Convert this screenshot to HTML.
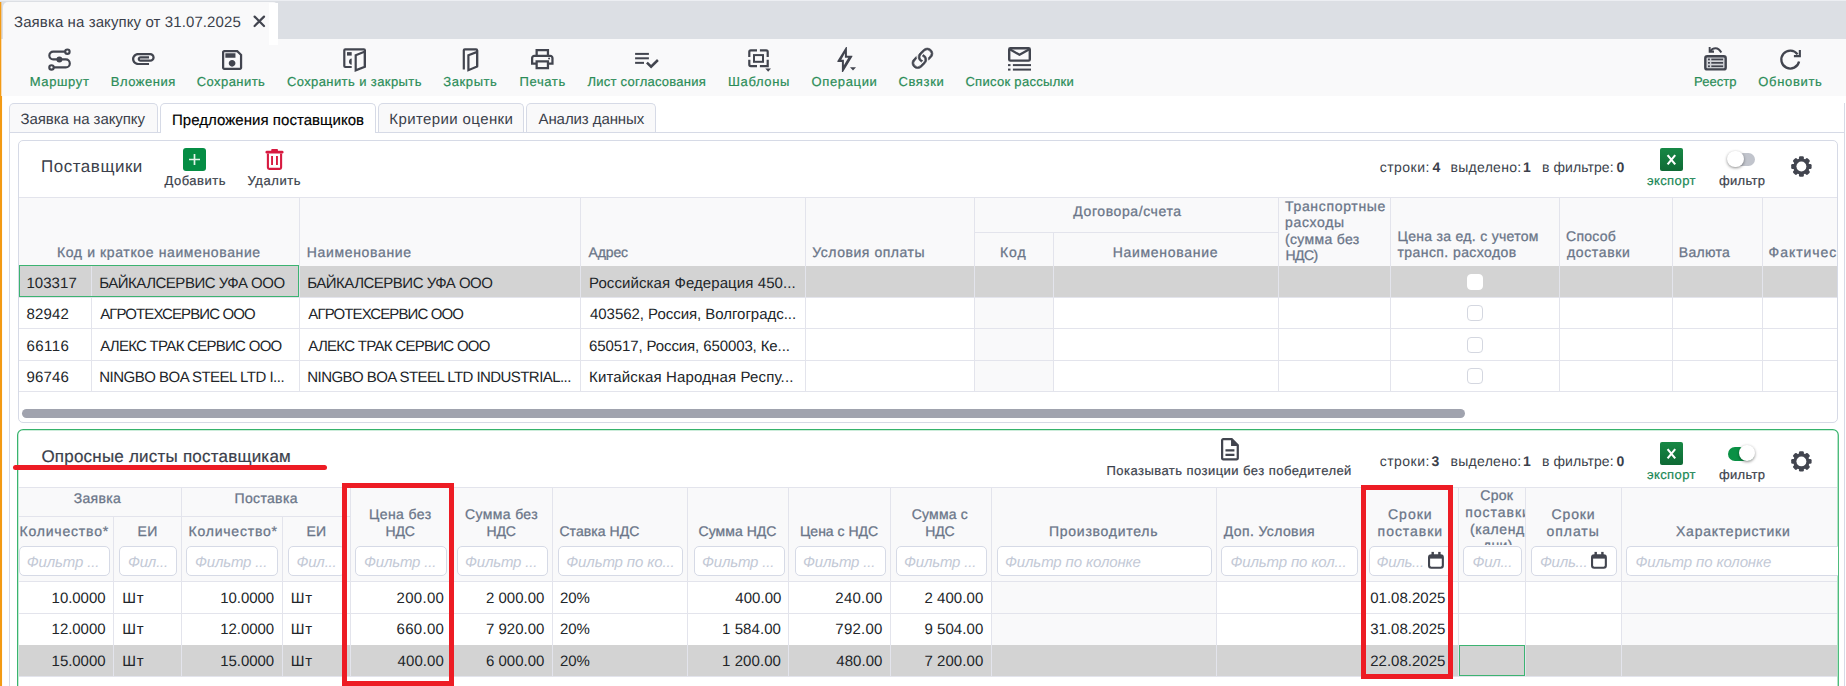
<!DOCTYPE html><html><head><meta charset="utf-8"><title>Заявка на закупку</title><style>
html,body{margin:0;padding:0}
*{text-rendering:geometricPrecision}
body{width:1846px;height:686px;overflow:hidden;position:relative;background:#fff;font-family:"Liberation Sans", sans-serif}
.t{position:absolute;white-space:pre;line-height:20px;height:20px}
.c{position:absolute;overflow:hidden}
</style></head><body>
<div style="position:absolute;left:0px;top:0px;width:1846px;height:39px;background:#dcdfe4;"></div>
<div style="position:absolute;left:0px;top:0px;width:1846px;height:1px;background:#eceef2;"></div>
<div style="position:absolute;left:3px;top:2px;width:275px;height:37px;background:#f9f9fa;border-radius:5px 5px 0 0;"></div>
<div style="position:absolute;left:269px;top:3px;width:9px;height:42px;background:#fff;"></div>
<div style="position:absolute;left:0px;top:39px;width:1846px;height:57px;background:#f9f9fa;"></div>
<div style="position:absolute;left:269px;top:39px;width:9px;height:6px;background:#fff;"></div>
<svg style="position:absolute;left:0;top:0" width="4" height="686"><rect x="0" y="2" width="1.3" height="94" fill="#f39a14"/><rect x="0" y="96" width="2.05" height="590" fill="#f39a14"/></svg>
<div style="position:absolute;left:9px;top:132px;width:1836px;height:1px;background:#d6dae6;"></div>
<div style="position:absolute;left:9px;top:132px;width:1px;height:554px;background:#d6dae6;"></div>
<div style="position:absolute;left:1844px;top:103px;width:1px;height:583px;background:#d6dae6;"></div>
<div style="position:absolute;left:9px;top:103px;width:147px;height:28px;background:#f9f9fa;border:1px solid #d6dae6;border-bottom:none;border-radius:5px 5px 0 0"></div>
<div style="position:absolute;left:160px;top:103px;width:214px;height:29px;background:#fff;border:1px solid #d6dae6;border-bottom:none;border-radius:5px 5px 0 0"></div>
<div style="position:absolute;left:378px;top:103px;width:144px;height:28px;background:#f9f9fa;border:1px solid #d6dae6;border-bottom:none;border-radius:5px 5px 0 0"></div>
<div style="position:absolute;left:526px;top:103px;width:128px;height:28px;background:#f9f9fa;border:1px solid #d6dae6;border-bottom:none;border-radius:5px 5px 0 0"></div>
<div style="position:absolute;left:18px;top:140px;width:1818px;height:281px;border:1px solid #d6dae6;border-radius:5px;background:#fff"></div>
<div style="position:absolute;left:19px;top:197px;width:1818px;height:1px;background:#e3e4ec;"></div>
<div style="position:absolute;left:19px;top:198px;width:1818px;height:68px;background:#f9f9fa;"></div>
<div style="position:absolute;left:19px;top:266px;width:1818px;height:31px;background:#d3d3d3;"></div>
<div style="position:absolute;left:974px;top:297px;width:79px;height:31.5px;background:#f9f9fa;"></div>
<div style="position:absolute;left:974px;top:328.5px;width:79px;height:31.5px;background:#f9f9fa;"></div>
<div style="position:absolute;left:974px;top:360px;width:79px;height:31px;background:#f9f9fa;"></div>
<div style="position:absolute;left:19px;top:297px;width:1818px;height:1px;background:#e3e4ec;"></div>
<div style="position:absolute;left:19px;top:328px;width:1818px;height:1px;background:#e3e4ec;"></div>
<div style="position:absolute;left:19px;top:360px;width:1818px;height:1px;background:#e3e4ec;"></div>
<div style="position:absolute;left:19px;top:391px;width:1818px;height:1px;background:#e3e4ec;"></div>
<div style="position:absolute;left:299px;top:198px;width:1px;height:194px;background:#e3e4ec;"></div>
<div style="position:absolute;left:580px;top:198px;width:1px;height:194px;background:#e3e4ec;"></div>
<div style="position:absolute;left:805px;top:198px;width:1px;height:194px;background:#e3e4ec;"></div>
<div style="position:absolute;left:974px;top:198px;width:1px;height:194px;background:#e3e4ec;"></div>
<div style="position:absolute;left:1278px;top:198px;width:1px;height:194px;background:#e3e4ec;"></div>
<div style="position:absolute;left:1390px;top:198px;width:1px;height:194px;background:#e3e4ec;"></div>
<div style="position:absolute;left:1559px;top:198px;width:1px;height:194px;background:#e3e4ec;"></div>
<div style="position:absolute;left:1672px;top:198px;width:1px;height:194px;background:#e3e4ec;"></div>
<div style="position:absolute;left:1762px;top:198px;width:1px;height:194px;background:#e3e4ec;"></div>
<div style="position:absolute;left:91px;top:266px;width:1px;height:126px;background:#e3e4ec;"></div>
<div style="position:absolute;left:1053px;top:233px;width:1px;height:159px;background:#e3e4ec;"></div>
<div style="position:absolute;left:974px;top:232px;width:304px;height:1px;background:#e3e4ec;"></div>
<div style="position:absolute;left:19px;top:265px;width:278px;height:30px;border:1px solid #3cb371"></div>
<div style="position:absolute;left:1467px;top:273.5px;width:14px;height:14px;border:1px solid #fff;border-radius:4px;background:#fff"></div>
<div style="position:absolute;left:1467px;top:305px;width:14px;height:14px;border:1px solid #d4d7e0;border-radius:4px;background:#fff"></div>
<div style="position:absolute;left:1467px;top:336.5px;width:14px;height:14px;border:1px solid #d4d7e0;border-radius:4px;background:#fff"></div>
<div style="position:absolute;left:1467px;top:368px;width:14px;height:14px;border:1px solid #d4d7e0;border-radius:4px;background:#fff"></div>
<div style="position:absolute;left:22px;top:409px;width:1443px;height:9px;background:#a0a3ae;border-radius:5px;"></div>
<svg style="position:absolute;left:0;top:0;overflow:visible;" width="1846" height="686" viewBox="0 0 1846 686"><rect x="17.65" y="429.55" width="1820.6" height="300" rx="5.5" fill="#fff" stroke="#36b36c" stroke-width="1.25"/></svg>
<div style="position:absolute;left:19px;top:487px;width:1818px;height:1px;background:#e3e4ec;"></div>
<div style="position:absolute;left:19px;top:488px;width:1818px;height:93px;background:#f9f9fa;"></div>
<div style="position:absolute;left:19px;top:645px;width:1818px;height:31px;background:#d3d3d3;"></div>
<div style="position:absolute;left:991px;top:582px;width:225px;height:31px;background:#f9f9fa;"></div>
<div style="position:absolute;left:1622px;top:582px;width:215px;height:31px;background:#f9f9fa;"></div>
<div style="position:absolute;left:991px;top:614px;width:225px;height:31px;background:#f9f9fa;"></div>
<div style="position:absolute;left:1622px;top:614px;width:215px;height:31px;background:#f9f9fa;"></div>
<div style="position:absolute;left:19px;top:581px;width:1818px;height:1px;background:#e3e4ec;"></div>
<div style="position:absolute;left:19px;top:613px;width:1818px;height:1px;background:#e3e4ec;"></div>
<div style="position:absolute;left:19px;top:645px;width:1818px;height:1px;background:#e3e4ec;"></div>
<div style="position:absolute;left:19px;top:676px;width:1818px;height:1px;background:#e3e4ec;"></div>
<div style="position:absolute;left:19px;top:645px;width:1818px;height:1px;background:#d3d3d3;"></div>
<div style="position:absolute;left:113px;top:517px;width:1px;height:159px;background:#e3e4ec;"></div>
<div style="position:absolute;left:181px;top:488px;width:1px;height:188px;background:#e3e4ec;"></div>
<div style="position:absolute;left:282px;top:517px;width:1px;height:159px;background:#e3e4ec;"></div>
<div style="position:absolute;left:350px;top:488px;width:1px;height:188px;background:#e3e4ec;"></div>
<div style="position:absolute;left:451px;top:488px;width:1px;height:188px;background:#e3e4ec;"></div>
<div style="position:absolute;left:552px;top:488px;width:1px;height:188px;background:#e3e4ec;"></div>
<div style="position:absolute;left:687px;top:488px;width:1px;height:188px;background:#e3e4ec;"></div>
<div style="position:absolute;left:788px;top:488px;width:1px;height:188px;background:#e3e4ec;"></div>
<div style="position:absolute;left:890px;top:488px;width:1px;height:188px;background:#e3e4ec;"></div>
<div style="position:absolute;left:991px;top:488px;width:1px;height:188px;background:#e3e4ec;"></div>
<div style="position:absolute;left:1216px;top:488px;width:1px;height:188px;background:#e3e4ec;"></div>
<div style="position:absolute;left:1362px;top:488px;width:1px;height:188px;background:#e3e4ec;"></div>
<div style="position:absolute;left:1458px;top:488px;width:1px;height:188px;background:#e3e4ec;"></div>
<div style="position:absolute;left:1525px;top:488px;width:1px;height:188px;background:#e3e4ec;"></div>
<div style="position:absolute;left:1621px;top:488px;width:1px;height:188px;background:#e3e4ec;"></div>
<div style="position:absolute;left:19px;top:516px;width:331px;height:1px;background:#e3e4ec;"></div>
<div style="position:absolute;left:19px;top:546px;width:89px;height:28px;border:1px solid #d6dae6;border-radius:5px;background:#fff"></div>
<div style="position:absolute;left:119px;top:546px;width:55.5px;height:28px;border:1px solid #d6dae6;border-radius:5px;background:#fff"></div>
<div style="position:absolute;left:186px;top:546px;width:89.5px;height:28px;border:1px solid #d6dae6;border-radius:5px;background:#fff"></div>
<div style="position:absolute;left:288px;top:546px;width:55px;height:28px;border:1px solid #d6dae6;border-radius:5px;background:#fff"></div>
<div style="position:absolute;left:355px;top:546px;width:89.5px;height:28px;border:1px solid #d6dae6;border-radius:5px;background:#fff"></div>
<div style="position:absolute;left:456.5px;top:546px;width:89.0px;height:28px;border:1px solid #d6dae6;border-radius:5px;background:#fff"></div>
<div style="position:absolute;left:558px;top:546px;width:122.5px;height:28px;border:1px solid #d6dae6;border-radius:5px;background:#fff"></div>
<div style="position:absolute;left:693.5px;top:546px;width:89.0px;height:28px;border:1px solid #d6dae6;border-radius:5px;background:#fff"></div>
<div style="position:absolute;left:794.5px;top:546px;width:89.0px;height:28px;border:1px solid #d6dae6;border-radius:5px;background:#fff"></div>
<div style="position:absolute;left:895.5px;top:546px;width:89.0px;height:28px;border:1px solid #d6dae6;border-radius:5px;background:#fff"></div>
<div style="position:absolute;left:996.5px;top:546px;width:213.0px;height:28px;border:1px solid #d6dae6;border-radius:5px;background:#fff"></div>
<div style="position:absolute;left:1221px;top:546px;width:134.5px;height:28px;border:1px solid #d6dae6;border-radius:5px;background:#fff"></div>
<div style="position:absolute;left:1368.5px;top:546px;width:82.5px;height:28px;border:1px solid #d6dae6;border-radius:5px;background:#fff"></div>
<div style="position:absolute;left:1463px;top:546px;width:56.5px;height:28px;border:1px solid #d6dae6;border-radius:5px;background:#fff"></div>
<div style="position:absolute;left:1531px;top:546px;width:83.5px;height:28px;border:1px solid #d6dae6;border-radius:5px;background:#fff"></div>
<div style="position:absolute;left:1626px;top:546px;width:211px;height:28px;border:1px solid #d6dae6;border-right:none;border-radius:5px 0 0 5px;background:#fff"></div>
<div style="position:absolute;left:1459px;top:645px;width:64px;height:29px;border:1px solid #3cb371"></div>
<svg style="position:absolute;left:0;top:0;overflow:visible;" width="1846" height="686" viewBox="0 0 1846 686"><path d="M254.6 16.6 L264 26 M264 16.6 L254.6 26" stroke="#42454f" stroke-width="2.2" stroke-linecap="round" fill="none"/></svg>
<svg style="position:absolute;left:0;top:0;overflow:visible;" width="1846" height="686" viewBox="0 0 1846 686"><g fill="none" stroke="#42454f" stroke-width="2.15">
<path d="M65.2 51.65 H53.2 a3.87 3.87 0 0 0 0 7.75 H65.8 a4 4 0 0 1 0 8 H53.7"/>
<circle cx="67.4" cy="51.65" r="2.2"/><circle cx="51.5" cy="67.4" r="2.2"/></g>
<circle cx="59.4" cy="59.4" r="3" fill="#42454f"/></svg>
<svg style="position:absolute;left:132.2px;top:52.9px;overflow:visible;" width="22.70" height="12.10" viewBox="2 7 20 11" preserveAspectRatio="none"><path fill="#42454f" d="M2 12.5C2 9.46 4.46 7 7.5 7H18c2.21 0 4 1.79 4 4s-1.79 4-4 4H9.5C8.12 15 7 13.88 7 12.5S8.12 10 9.5 10H17v2H9.41c-.55 0-.55 1 0 1H18c1.1 0 2-.9 2-2s-.9-2-2-2H7.5C5.57 9 4 10.57 4 12.5S5.57 16 7.5 16H17v2H7.5C4.46 18 2 15.54 2 12.5z"/></svg>
<svg style="position:absolute;left:221.5px;top:49.5px;overflow:visible;" width="20.20" height="20.00" viewBox="3 3 18 18" preserveAspectRatio="none"><path fill="#42454f" d="M17 3H5c-1.11 0-2 .9-2 2v14c0 1.1.89 2 2 2h14c1.1 0 2-.9 2-2V7l-4-4zm2 16H5V5h11.17L19 7.83V19zm-7-7c-1.66 0-3 1.34-3 3s1.34 3 3 3 3-1.34 3-3-1.34-3-3-3zM6 6h9v4H6z"/></svg>
<svg style="position:absolute;left:0;top:0;overflow:visible;" width="1846" height="686" viewBox="0 0 1846 686"><g fill="none" stroke="#42454f" stroke-width="2.2">
<path d="M351.7 67 H345.3 a1 1 0 0 1 -1 -1 V50.3 a1 1 0 0 1 1 -1 H363.9 a1 1 0 0 1 1 1 V66.7"/>
<path d="M355.7 55.2 L364.9 51.6 V66.7 L355.7 70.3 Z"/></g>
<rect x="347" y="52.1" width="4.7" height="3.5" fill="#42454f"/>
<path d="M351.7 58.6 a3.3 3.1 0 0 0 0 6.1 Z" fill="#42454f"/></svg>
<svg style="position:absolute;left:0;top:0;overflow:visible;" width="1846" height="686" viewBox="0 0 1846 686"><g fill="none" stroke="#42454f" stroke-width="2.2">
<path d="M463.8 69.6 V50.3 a1 1 0 0 1 1 -1 H476.1 a1 1 0 0 1 1 1 V66.5"/>
<path d="M468.4 55.3 L477.1 51.9 V66.5 L468.4 70.2 Z"/></g></svg>
<svg style="position:absolute;left:531.3px;top:49.3px;overflow:visible;" width="22.60" height="20.30" viewBox="2 3 20 18" preserveAspectRatio="none"><path fill="#42454f" d="M19 8h-1V3H6v5H5c-1.66 0-3 1.34-3 3v6h4v4h12v-4h4v-6c0-1.66-1.34-3-3-3zM8 5h8v3H8V5zm8 14H8v-4h8v4zm2-4v-2H6v2H4v-4c0-.55.45-1 1-1h14c.55 0 1 .45 1 1v4h-2z"/><circle cx="18" cy="11.5" r="0.9" fill="#42454f"/></svg>
<svg style="position:absolute;left:0;top:0;overflow:visible;" width="1846" height="686" viewBox="0 0 1846 686"><g fill="#42454f"><rect x="635.1" y="52.9" width="13.8" height="2"/><rect x="635.1" y="57.3" width="13.8" height="2"/><rect x="635.1" y="61.85" width="8.9" height="2"/></g>
<path d="M646.9 62.6 L651.1 66.7 L657.9 60" fill="none" stroke="#42454f" stroke-width="2.5"/></svg>
<svg style="position:absolute;left:0;top:0;overflow:visible;" width="1846" height="686" viewBox="0 0 1846 686"><g fill="none" stroke="#42454f" stroke-width="2.2">
<path d="M749.3 56.9 V51.85 a1.5 1.5 0 0 1 1.5 -1.5 H757 M759.9 50.35 H766.2 a1.5 1.5 0 0 1 1.5 1.5 V56.9 M749.3 59.75 V64.6 a1.5 1.5 0 0 0 1.5 1.5 H757 M767.7 59.75 V66.1 H759.9"/>
<rect x="754" y="55.1" width="9" height="6.7" stroke-width="2"/></g>
<path d="M765.3 68.4 H771 L768.15 71.8 Z" fill="#42454f"/></svg>
<svg style="position:absolute;left:0;top:0;overflow:visible;" width="1846" height="686" viewBox="0 0 1846 686"><path fill-rule="evenodd" fill="#42454f" d="M846 47 L846.9 47 L846.9 55.7 L852.4 55.7 L852.4 56.6 L843 72 L841.9 72 L841.9 61.9 L837.4 61.9 L837.4 60.9 Z M844.9 53.3 L844.9 57.8 L848.3 57.8 L843.9 65.3 L843.9 59.8 L841.3 59.8 Z"/>
<path d="M850 67.3 H856 L853 70.4 Z" fill="#42454f"/></svg>
<svg style="position:absolute;left:911.5px;top:49.4px;overflow:visible;" width="20.90" height="20.50" viewBox="2.46 2.46 11.08 11.08" preserveAspectRatio="none"><g fill="#42454f" stroke="#42454f" stroke-width="0.35"><path d="M4.715 6.542 3.343 7.914a3 3 0 1 0 4.243 4.243l1.828-1.829A3 3 0 0 0 8.586 5.5L8 6.086a1.002 1.002 0 0 0-.154.199 2 2 0 0 1 .861 3.337L6.88 11.45a2 2 0 1 1-2.83-2.83l.793-.792a4.018 4.018 0 0 1-.128-1.287z"/><path d="M6.586 4.672A3 3 0 0 0 7.414 9.5l.775-.776a2 2 0 0 1-.896-3.346L9.12 3.55a2 2 0 1 1 2.83 2.83l-.793.792c.112.42.155.855.128 1.287l1.372-1.372a3 3 0 1 0-4.243-4.243L6.586 4.672z"/></g></svg>
<svg style="position:absolute;left:0;top:0;overflow:visible;" width="1846" height="686" viewBox="0 0 1846 686"><g fill="none" stroke="#42454f" stroke-width="2.4" stroke-linejoin="round">
<rect x="1009.2" y="48.2" width="20.6" height="12.4" rx="1.2"/>
<path d="M1009.8 49.2 L1019.5 54.8 L1029.4 49.2" stroke-width="2.2"/></g>
<rect x="1008" y="64.1" width="2.5" height="2" fill="#42454f"/><rect x="1012.9" y="64.1" width="18.1" height="2" fill="#42454f"/>
<rect x="1008" y="68.6" width="2.5" height="2" fill="#42454f"/><rect x="1012.9" y="68.6" width="18.1" height="2" fill="#42454f"/></svg>
<svg style="position:absolute;left:0;top:0;overflow:visible;" width="1846" height="686" viewBox="0 0 1846 686"><rect x="1705.3" y="56.2" width="20.4" height="13.2" rx="2" fill="#d2d4d9" stroke="#42454f" stroke-width="2.4"/>
<g fill="#42454f">
<rect x="1708" y="58.6" width="1.9" height="1.7"/><rect x="1711.3" y="58.6" width="11.8" height="1.7"/>
<rect x="1708" y="62.0" width="1.9" height="1.7"/><rect x="1711.3" y="62.0" width="11.8" height="1.7"/>
<rect x="1708" y="65.4" width="1.9" height="1.7"/><rect x="1711.3" y="65.4" width="11.8" height="1.7"/>
<path d="M1708.7 46.9 H1710.6 V50.6 H1714 V52.7 H1708.7 Z"/></g>
<path d="M1710.4 51.2 C1713 47.6 1718 46.6 1721.3 52.6" fill="none" stroke="#42454f" stroke-width="2"/></svg>
<svg style="position:absolute;left:0;top:0;overflow:visible;" width="1846" height="686" viewBox="0 0 1846 686"><path d="M1797.54 54.34 A8.95 8.95 0 1 0 1799.05 61.46" fill="none" stroke="#42454f" stroke-width="2.3"/>
<path d="M1799.85 50.1 V56.1 H1793.9" fill="none" stroke="#42454f" stroke-width="2.1"/></svg>
<div style="position:absolute;left:183px;top:148px;width:23px;height:23px;background:#058d44;border-radius:3px;"></div>
<svg style="position:absolute;left:0;top:0;overflow:visible;" width="1846" height="686" viewBox="0 0 1846 686"><path d="M189 159.5 H200 M194.5 154 V165" stroke="#e4f3ea" stroke-width="1.7" fill="none"/></svg>
<svg style="position:absolute;left:0;top:0;overflow:visible;" width="1846" height="686" viewBox="0 0 1846 686"><g fill="#d71a40"><rect x="265.5" y="150.8" width="18" height="2.8" rx="1.3"/><rect x="271.2" y="149" width="6.8" height="2.6" rx="1"/>
<rect x="271.1" y="156" width="1.9" height="9"/><rect x="276" y="156" width="1.9" height="9"/></g>
<path d="M267.9 153.5 V167.6 a1.3 1.3 0 0 0 1.3 1.3 H279.8 a1.3 1.3 0 0 0 1.3 -1.3 V153.5" fill="none" stroke="#d71a40" stroke-width="2.1"/></svg>
<div style="position:absolute;left:1660px;top:148px;width:23px;height:23px;background:linear-gradient(#178845,#0f6a35);border-radius:2px"></div>
<svg style="position:absolute;left:0;top:0;overflow:visible;" width="1846" height="686" viewBox="0 0 1846 686"><path d="M1667.6 155.1 L1675.2 164.4 M1675.2 155.1 L1667.6 164.4" stroke="#fff" stroke-width="2.1" fill="none"/></svg>
<div style="position:absolute;left:1728px;top:153px;width:27px;height:13px;border-radius:7px;background:#c1c4cc"></div>
<div style="position:absolute;left:1727.4px;top:150.8px;width:16.4px;height:16.4px;border-radius:8.2px;background:#fff;box-shadow:0 1px 3px rgba(0,0,0,.45)"></div>
<div style="position:absolute;left:1660px;top:442px;width:23px;height:23px;background:linear-gradient(#178845,#0f6a35);border-radius:2px"></div>
<svg style="position:absolute;left:0;top:0;overflow:visible;" width="1846" height="686" viewBox="0 0 1846 686"><path d="M1667.6 449.1 L1675.2 458.4 M1675.2 449.1 L1667.6 458.4" stroke="#fff" stroke-width="2.1" fill="none"/></svg>
<div style="position:absolute;left:1728px;top:446.7px;width:26px;height:14px;border-radius:7px;background:#0a9145"></div>
<div style="position:absolute;left:1739.3px;top:445.1px;width:16px;height:16px;border-radius:8px;background:#fff;box-shadow:0 1px 3px rgba(0,0,0,.45)"></div>
<svg style="position:absolute;left:0;top:0;overflow:visible;" width="1846" height="686" viewBox="0 0 1846 686"><g transform="translate(1801.4 166.5)" fill="#42454f"><rect x="-2.45" y="-10.2" width="4.9" height="5" rx="1.3" transform="rotate(0)"/><rect x="-2.45" y="-10.2" width="4.9" height="5" rx="1.3" transform="rotate(45)"/><rect x="-2.45" y="-10.2" width="4.9" height="5" rx="1.3" transform="rotate(90)"/><rect x="-2.45" y="-10.2" width="4.9" height="5" rx="1.3" transform="rotate(135)"/><rect x="-2.45" y="-10.2" width="4.9" height="5" rx="1.3" transform="rotate(180)"/><rect x="-2.45" y="-10.2" width="4.9" height="5" rx="1.3" transform="rotate(225)"/><rect x="-2.45" y="-10.2" width="4.9" height="5" rx="1.3" transform="rotate(270)"/><rect x="-2.45" y="-10.2" width="4.9" height="5" rx="1.3" transform="rotate(315)"/><circle r="8.1"/><circle r="4.95" fill="#fff"/></g></svg>
<svg style="position:absolute;left:0;top:0;overflow:visible;" width="1846" height="686" viewBox="0 0 1846 686"><g transform="translate(1801.4 461.4)" fill="#42454f"><rect x="-2.45" y="-10.2" width="4.9" height="5" rx="1.3" transform="rotate(0)"/><rect x="-2.45" y="-10.2" width="4.9" height="5" rx="1.3" transform="rotate(45)"/><rect x="-2.45" y="-10.2" width="4.9" height="5" rx="1.3" transform="rotate(90)"/><rect x="-2.45" y="-10.2" width="4.9" height="5" rx="1.3" transform="rotate(135)"/><rect x="-2.45" y="-10.2" width="4.9" height="5" rx="1.3" transform="rotate(180)"/><rect x="-2.45" y="-10.2" width="4.9" height="5" rx="1.3" transform="rotate(225)"/><rect x="-2.45" y="-10.2" width="4.9" height="5" rx="1.3" transform="rotate(270)"/><rect x="-2.45" y="-10.2" width="4.9" height="5" rx="1.3" transform="rotate(315)"/><circle r="8.1"/><circle r="4.95" fill="#fff"/></g></svg>
<svg style="position:absolute;left:1220.5px;top:438.2px;overflow:visible;" width="17.90" height="22.60" viewBox="4 2 16 20" preserveAspectRatio="none"><path fill="#42454f" d="M8 16h8v2H8zm0-4h8v2H8zm6-10H6c-1.1 0-2 .9-2 2v16c0 1.1.89 2 1.99 2H18c1.1 0 2-.9 2-2V8l-6-6zm4 18H6V4h7v5h5v11z"/><path fill="#42454f" d="M13.6 3.5 L18.6 8.6 H13.6Z"/></svg>
<svg style="position:absolute;left:0;top:0;overflow:visible;" width="1846" height="686" viewBox="0 0 1846 686"><rect x="1429.05" y="555.1999999999999" width="13.8" height="12.5" rx="2.2" fill="none" stroke="#42454f" stroke-width="2.1"/>
<rect x="1429" y="555.3" width="13.9" height="3.3" fill="#42454f"/>
<rect x="1431.5" y="551.9" width="2.4" height="3.5" fill="#42454f"/><rect x="1438.2" y="551.9" width="2.4" height="3.5" fill="#42454f"/></svg>
<svg style="position:absolute;left:0;top:0;overflow:visible;" width="1846" height="686" viewBox="0 0 1846 686"><rect x="1592.05" y="555.1999999999999" width="13.8" height="12.5" rx="2.2" fill="none" stroke="#42454f" stroke-width="2.1"/>
<rect x="1592" y="555.3" width="13.9" height="3.3" fill="#42454f"/>
<rect x="1594.5" y="551.9" width="2.4" height="3.5" fill="#42454f"/><rect x="1601.2" y="551.9" width="2.4" height="3.5" fill="#42454f"/></svg>
<span class="t" style="left:14.00px;top:13.00px;font-size:15px;color:#3b3f4b;letter-spacing:0.100px;">Заявка на закупку от 31.07.2025</span>
<span class="t" style="left:29.70px;top:72.00px;font-size:13px;color:#2a8c57;letter-spacing:0.633px;-webkit-text-stroke:0.2px #2a8c57;">Маршрут</span>
<span class="t" style="left:110.70px;top:72.00px;font-size:13px;color:#2a8c57;letter-spacing:0.543px;-webkit-text-stroke:0.2px #2a8c57;">Вложения</span>
<span class="t" style="left:196.70px;top:72.00px;font-size:13px;color:#2a8c57;letter-spacing:0.438px;-webkit-text-stroke:0.2px #2a8c57;">Сохранить</span>
<span class="t" style="left:286.90px;top:72.00px;font-size:13px;color:#2a8c57;letter-spacing:0.406px;-webkit-text-stroke:0.2px #2a8c57;">Сохранить и закрыть</span>
<span class="t" style="left:443.30px;top:72.00px;font-size:13px;color:#2a8c57;letter-spacing:0.583px;-webkit-text-stroke:0.2px #2a8c57;">Закрыть</span>
<span class="t" style="left:519.50px;top:72.00px;font-size:13px;color:#2a8c57;letter-spacing:0.620px;-webkit-text-stroke:0.2px #2a8c57;">Печать</span>
<span class="t" style="left:587.50px;top:72.00px;font-size:13px;color:#2a8c57;letter-spacing:0.244px;-webkit-text-stroke:0.2px #2a8c57;">Лист согласования</span>
<span class="t" style="left:728.00px;top:72.00px;font-size:13px;color:#2a8c57;letter-spacing:0.633px;-webkit-text-stroke:0.2px #2a8c57;">Шаблоны</span>
<span class="t" style="left:811.50px;top:72.00px;font-size:13px;color:#2a8c57;letter-spacing:0.643px;-webkit-text-stroke:0.2px #2a8c57;">Операции</span>
<span class="t" style="left:898.40px;top:72.00px;font-size:13px;color:#2a8c57;letter-spacing:0.660px;-webkit-text-stroke:0.2px #2a8c57;">Связки</span>
<span class="t" style="left:965.40px;top:72.00px;font-size:13px;color:#2a8c57;letter-spacing:0.300px;-webkit-text-stroke:0.2px #2a8c57;">Список рассылки</span>
<span class="t" style="left:1694.10px;top:72.00px;font-size:13px;color:#2a8c57;letter-spacing:0.020px;-webkit-text-stroke:0.2px #2a8c57;">Реестр</span>
<span class="t" style="left:1758.30px;top:72.00px;font-size:13px;color:#2a8c57;letter-spacing:0.671px;-webkit-text-stroke:0.2px #2a8c57;">Обновить</span>
<span class="t" style="left:20.50px;top:110.00px;font-size:15px;color:#3b3f4b;letter-spacing:-0.062px;">Заявка на закупку</span>
<span class="t" style="left:172.00px;top:111.00px;font-size:15px;color:#000;letter-spacing:0.045px;-webkit-text-stroke:0.15px #000;">Предложения поставщиков</span>
<span class="t" style="left:389.30px;top:110.00px;font-size:15px;color:#3b3f4b;letter-spacing:0.393px;">Критерии оценки</span>
<span class="t" style="left:538.50px;top:110.00px;font-size:15px;color:#3b3f4b;letter-spacing:-0.083px;">Анализ данных</span>
<span class="t" style="left:41.00px;top:157.00px;font-size:17px;color:#3b3f4b;letter-spacing:0.522px;">Поставщики</span>
<span class="t" style="left:164.50px;top:171.00px;font-size:13px;color:#3b3f4b;letter-spacing:0.500px;-webkit-text-stroke:0.2px #3b3f4b;">Добавить</span>
<span class="t" style="left:247.50px;top:171.00px;font-size:13px;color:#3b3f4b;letter-spacing:0.583px;-webkit-text-stroke:0.2px #3b3f4b;">Удалить</span>
<span class="t" style="left:1379.80px;top:157.00px;font-size:14px;color:#3b3f4b;letter-spacing:0.450px;">строки:</span>
<span class="t" style="left:1432.50px;top:157.00px;font-size:14px;color:#3b3f4b;font-weight:700;">4</span>
<span class="t" style="left:1450.50px;top:157.00px;font-size:14px;color:#3b3f4b;letter-spacing:0.287px;">выделено:</span>
<span class="t" style="left:1523.00px;top:157.00px;font-size:14px;color:#3b3f4b;font-weight:700;">1</span>
<span class="t" style="left:1542.00px;top:157.00px;font-size:14px;color:#3b3f4b;letter-spacing:0.078px;">в фильтре:</span>
<span class="t" style="left:1616.50px;top:157.00px;font-size:14px;color:#3b3f4b;font-weight:700;">0</span>
<span class="t" style="left:1647.00px;top:171.00px;font-size:13px;color:#198754;letter-spacing:0.383px;-webkit-text-stroke:0.2px #198754;">экспорт</span>
<span class="t" style="left:1719.00px;top:171.00px;font-size:13px;color:#3b3f4b;letter-spacing:0.320px;-webkit-text-stroke:0.2px #3b3f4b;">фильтр</span>
<span class="t" style="left:57.00px;top:242.00px;font-size:14px;color:#6a7588;letter-spacing:0.620px;-webkit-text-stroke:0.28px #6a7588;">Код и краткое наименование</span>
<span class="t" style="left:306.70px;top:242.00px;font-size:14px;color:#6a7588;letter-spacing:0.673px;-webkit-text-stroke:0.28px #6a7588;">Наименование</span>
<span class="t" style="left:588.60px;top:242.00px;font-size:14px;color:#6a7588;letter-spacing:-0.150px;-webkit-text-stroke:0.28px #6a7588;">Адрес</span>
<span class="t" style="left:812.30px;top:242.00px;font-size:14px;color:#6a7588;letter-spacing:0.538px;-webkit-text-stroke:0.28px #6a7588;">Условия оплаты</span>
<span class="t" style="left:1073.30px;top:201.00px;font-size:14px;color:#6a7588;letter-spacing:0.592px;-webkit-text-stroke:0.28px #6a7588;">Договора/счета</span>
<span class="t" style="left:1000.00px;top:242.00px;font-size:14px;color:#6a7588;letter-spacing:0.900px;-webkit-text-stroke:0.28px #6a7588;">Код</span>
<span class="t" style="left:1112.70px;top:242.00px;font-size:14px;color:#6a7588;letter-spacing:0.700px;-webkit-text-stroke:0.28px #6a7588;">Наименование</span>
<span class="t" style="left:1285.00px;top:196.00px;font-size:14px;color:#6a7588;letter-spacing:0.673px;-webkit-text-stroke:0.28px #6a7588;">Транспортные</span>
<span class="t" style="left:1285.00px;top:212.00px;font-size:14px;color:#6a7588;letter-spacing:0.667px;-webkit-text-stroke:0.28px #6a7588;">расходы</span>
<span class="t" style="left:1285.00px;top:229.00px;font-size:14px;color:#6a7588;letter-spacing:0.333px;-webkit-text-stroke:0.28px #6a7588;">(сумма без</span>
<span class="t" style="left:1285.50px;top:245.00px;font-size:14px;color:#6a7588;letter-spacing:-0.600px;-webkit-text-stroke:0.28px #6a7588;">НДС)</span>
<span class="t" style="left:1397.50px;top:226.00px;font-size:14px;color:#6a7588;letter-spacing:0.300px;-webkit-text-stroke:0.28px #6a7588;">Цена за ед. с учетом</span>
<span class="t" style="left:1397.50px;top:242.00px;font-size:14px;color:#6a7588;letter-spacing:0.420px;-webkit-text-stroke:0.28px #6a7588;">трансп. расходов</span>
<span class="t" style="left:1566.00px;top:226.00px;font-size:14px;color:#6a7588;letter-spacing:0.280px;-webkit-text-stroke:0.28px #6a7588;">Способ</span>
<span class="t" style="left:1567.00px;top:242.00px;font-size:14px;color:#6a7588;letter-spacing:0.629px;-webkit-text-stroke:0.28px #6a7588;">доставки</span>
<span class="t" style="left:1678.80px;top:242.00px;font-size:14px;color:#6a7588;letter-spacing:0.280px;-webkit-text-stroke:0.28px #6a7588;">Валюта</span>
<div class="c" style="left:1763px;top:240px;width:74px;height:25px"><span class="t" style="left:5.60px;top:2.00px;font-size:14px;color:#6a7588;letter-spacing:0.940px;-webkit-text-stroke:0.28px #6a7588;">Фактические</span></div>
<span class="t" style="left:26.40px;top:274.00px;font-size:15px;color:#212529;letter-spacing:0.060px;">103317</span>
<span class="t" style="left:99.20px;top:274.00px;font-size:15px;color:#212529;letter-spacing:-0.484px;">БАЙКАЛСЕРВИС УФА ООО</span>
<span class="t" style="left:307.30px;top:274.00px;font-size:15px;color:#212529;letter-spacing:-0.500px;">БАЙКАЛСЕРВИС УФА ООО</span>
<span class="t" style="left:589.00px;top:274.00px;font-size:15px;color:#212529;letter-spacing:0.085px;">Российская Федерация 450...</span>
<span class="t" style="left:26.40px;top:305.00px;font-size:15px;color:#212529;letter-spacing:0.200px;">82942</span>
<span class="t" style="left:100.20px;top:305.00px;font-size:15px;color:#212529;letter-spacing:-0.894px;">АГРОТЕХСЕРВИС ООО</span>
<span class="t" style="left:308.30px;top:305.00px;font-size:15px;color:#212529;letter-spacing:-0.881px;">АГРОТЕХСЕРВИС ООО</span>
<span class="t" style="left:590.00px;top:305.00px;font-size:15px;color:#212529;letter-spacing:-0.036px;">403562, Россия, Волгоградс...</span>
<span class="t" style="left:26.40px;top:337.00px;font-size:15px;color:#212529;letter-spacing:0.450px;">66116</span>
<span class="t" style="left:100.20px;top:337.00px;font-size:15px;color:#212529;letter-spacing:-0.720px;">АЛЕКС ТРАК СЕРВИС ООО</span>
<span class="t" style="left:308.30px;top:337.00px;font-size:15px;color:#212529;letter-spacing:-0.715px;">АЛЕКС ТРАК СЕРВИС ООО</span>
<span class="t" style="left:589.00px;top:337.00px;font-size:15px;color:#212529;letter-spacing:-0.107px;">650517, Россия, 650003, Ке...</span>
<span class="t" style="left:26.40px;top:368.00px;font-size:15px;color:#212529;letter-spacing:0.200px;">96746</span>
<span class="t" style="left:99.20px;top:368.00px;font-size:15px;color:#212529;letter-spacing:-0.508px;">NINGBO BOA STEEL LTD I...</span>
<span class="t" style="left:307.30px;top:368.00px;font-size:15px;color:#212529;letter-spacing:-0.561px;">NINGBO BOA STEEL LTD INDUSTRIAL...</span>
<span class="t" style="left:589.00px;top:368.00px;font-size:15px;color:#212529;letter-spacing:0.146px;">Китайская Народная Респу...</span>
<span class="t" style="left:41.40px;top:447.00px;font-size:17px;color:#3b3f4b;letter-spacing:0.216px;-webkit-text-stroke:0.2px #3b3f4b;">Опросные листы поставщикам</span>
<span class="t" style="left:1106.50px;top:461.00px;font-size:13px;color:#3b3f4b;letter-spacing:0.458px;-webkit-text-stroke:0.2px #3b3f4b;">Показывать позиции без победителей</span>
<span class="t" style="left:1379.80px;top:451.00px;font-size:14px;color:#3b3f4b;letter-spacing:0.450px;">строки:</span>
<span class="t" style="left:1431.50px;top:451.00px;font-size:14px;color:#3b3f4b;font-weight:700;">3</span>
<span class="t" style="left:1450.50px;top:451.00px;font-size:14px;color:#3b3f4b;letter-spacing:0.287px;">выделено:</span>
<span class="t" style="left:1523.00px;top:451.00px;font-size:14px;color:#3b3f4b;font-weight:700;">1</span>
<span class="t" style="left:1542.00px;top:451.00px;font-size:14px;color:#3b3f4b;letter-spacing:0.078px;">в фильтре:</span>
<span class="t" style="left:1616.50px;top:451.00px;font-size:14px;color:#3b3f4b;font-weight:700;">0</span>
<span class="t" style="left:1647.00px;top:465.00px;font-size:13px;color:#198754;letter-spacing:0.383px;-webkit-text-stroke:0.2px #198754;">экспорт</span>
<span class="t" style="left:1719.00px;top:465.00px;font-size:13px;color:#3b3f4b;letter-spacing:0.320px;-webkit-text-stroke:0.2px #3b3f4b;">фильтр</span>
<span class="t" style="left:73.70px;top:488.00px;font-size:14px;color:#6a7588;letter-spacing:0.300px;-webkit-text-stroke:0.28px #6a7588;">Заявка</span>
<span class="t" style="left:234.50px;top:488.00px;font-size:14px;color:#6a7588;letter-spacing:0.343px;-webkit-text-stroke:0.28px #6a7588;">Поставка</span>
<span class="t" style="left:19.50px;top:521.00px;font-size:14px;color:#6a7588;letter-spacing:0.810px;-webkit-text-stroke:0.28px #6a7588;">Количество*</span>
<span class="t" style="left:137.40px;top:521.00px;font-size:14px;color:#6a7588;letter-spacing:0.600px;-webkit-text-stroke:0.28px #6a7588;">ЕИ</span>
<span class="t" style="left:188.50px;top:521.00px;font-size:14px;color:#6a7588;letter-spacing:0.790px;-webkit-text-stroke:0.28px #6a7588;">Количество*</span>
<span class="t" style="left:306.40px;top:521.00px;font-size:14px;color:#6a7588;letter-spacing:0.200px;-webkit-text-stroke:0.28px #6a7588;">ЕИ</span>
<span class="t" style="left:369.00px;top:504.00px;font-size:14px;color:#6a7588;letter-spacing:0.400px;-webkit-text-stroke:0.28px #6a7588;">Цена без</span>
<span class="t" style="left:385.50px;top:521.00px;font-size:14px;color:#6a7588;letter-spacing:-0.150px;-webkit-text-stroke:0.28px #6a7588;">НДС</span>
<span class="t" style="left:465.00px;top:504.00px;font-size:14px;color:#6a7588;letter-spacing:0.375px;-webkit-text-stroke:0.28px #6a7588;">Сумма без</span>
<span class="t" style="left:486.50px;top:521.00px;font-size:14px;color:#6a7588;letter-spacing:-0.150px;-webkit-text-stroke:0.28px #6a7588;">НДС</span>
<span class="t" style="left:559.40px;top:521.00px;font-size:14px;color:#6a7588;letter-spacing:0.067px;-webkit-text-stroke:0.28px #6a7588;">Ставка НДС</span>
<span class="t" style="left:698.60px;top:521.00px;font-size:14px;color:#6a7588;letter-spacing:0.037px;-webkit-text-stroke:0.28px #6a7588;">Сумма НДС</span>
<span class="t" style="left:800.00px;top:521.00px;font-size:14px;color:#6a7588;-webkit-text-stroke:0.28px #6a7588;">Цена с НДС</span>
<span class="t" style="left:911.70px;top:504.00px;font-size:14px;color:#6a7588;letter-spacing:0.217px;-webkit-text-stroke:0.28px #6a7588;">Сумма с</span>
<span class="t" style="left:925.30px;top:521.00px;font-size:14px;color:#6a7588;letter-spacing:-0.150px;-webkit-text-stroke:0.28px #6a7588;">НДС</span>
<span class="t" style="left:1049.00px;top:521.00px;font-size:14px;color:#6a7588;letter-spacing:0.733px;-webkit-text-stroke:0.28px #6a7588;">Производитель</span>
<span class="t" style="left:1223.80px;top:521.00px;font-size:14px;color:#6a7588;letter-spacing:0.382px;-webkit-text-stroke:0.28px #6a7588;">Доп. Условия</span>
<span class="t" style="left:1388.00px;top:504.00px;font-size:14px;color:#6a7588;letter-spacing:1.000px;-webkit-text-stroke:0.28px #6a7588;">Сроки</span>
<span class="t" style="left:1377.60px;top:521.00px;font-size:14px;color:#6a7588;letter-spacing:0.971px;-webkit-text-stroke:0.28px #6a7588;">поставки</span>
<div class="c" style="left:1459px;top:488px;width:66px;height:57px"><span class="t" style="left:21.30px;top:-3.00px;font-size:14px;color:#6a7588;letter-spacing:0.233px;-webkit-text-stroke:0.28px #6a7588;">Срок</span></div>
<div class="c" style="left:1459px;top:488px;width:66px;height:57px"><span class="t" style="left:6.30px;top:14.00px;font-size:14px;color:#6a7588;letter-spacing:0.957px;-webkit-text-stroke:0.28px #6a7588;">поставки</span></div>
<div class="c" style="left:1459px;top:488px;width:66px;height:57px"><span class="t" style="left:11.00px;top:31.00px;font-size:14px;color:#6a7588;letter-spacing:0.571px;-webkit-text-stroke:0.28px #6a7588;">(календ.</span></div>
<div class="c" style="left:1459px;top:488px;width:66px;height:56.5px"><span class="t" style="left:24.00px;top:47.00px;font-size:14px;color:#6a7588;letter-spacing:0.333px;-webkit-text-stroke:0.28px #6a7588;">дни)</span></div>
<span class="t" style="left:1551.50px;top:504.00px;font-size:14px;color:#6a7588;letter-spacing:0.875px;-webkit-text-stroke:0.28px #6a7588;">Сроки</span>
<span class="t" style="left:1546.60px;top:521.00px;font-size:14px;color:#6a7588;letter-spacing:0.940px;-webkit-text-stroke:0.28px #6a7588;">оплаты</span>
<span class="t" style="left:1676.00px;top:521.00px;font-size:14px;color:#6a7588;letter-spacing:0.769px;-webkit-text-stroke:0.28px #6a7588;">Характеристики</span>
<span class="t" style="left:26.80px;top:553.00px;font-size:15px;color:#c3c9d6;font-style:italic;letter-spacing:-0.144px;">Фильтр ...</span>
<span class="t" style="left:128.00px;top:553.00px;font-size:15px;color:#c3c9d6;font-style:italic;letter-spacing:-0.200px;">Фил...</span>
<span class="t" style="left:195.00px;top:553.00px;font-size:15px;color:#c3c9d6;font-style:italic;letter-spacing:-0.167px;">Фильтр ...</span>
<span class="t" style="left:296.50px;top:553.00px;font-size:15px;color:#c3c9d6;font-style:italic;letter-spacing:-0.200px;">Фил...</span>
<span class="t" style="left:364.00px;top:553.00px;font-size:15px;color:#c3c9d6;font-style:italic;letter-spacing:-0.167px;">Фильтр ...</span>
<span class="t" style="left:465.00px;top:553.00px;font-size:15px;color:#c3c9d6;font-style:italic;letter-spacing:-0.167px;">Фильтр ...</span>
<span class="t" style="left:566.30px;top:553.00px;font-size:15px;color:#c3c9d6;font-style:italic;letter-spacing:-0.129px;">Фильтр по ко...</span>
<span class="t" style="left:702.00px;top:553.00px;font-size:15px;color:#c3c9d6;font-style:italic;letter-spacing:-0.167px;">Фильтр ...</span>
<span class="t" style="left:803.00px;top:553.00px;font-size:15px;color:#c3c9d6;font-style:italic;letter-spacing:-0.167px;">Фильтр ...</span>
<span class="t" style="left:904.00px;top:553.00px;font-size:15px;color:#c3c9d6;font-style:italic;letter-spacing:-0.167px;">Фильтр ...</span>
<span class="t" style="left:1005.00px;top:553.00px;font-size:15px;color:#c3c9d6;font-style:italic;letter-spacing:-0.119px;">Фильтр по колонке</span>
<span class="t" style="left:1230.40px;top:553.00px;font-size:15px;color:#c3c9d6;font-style:italic;letter-spacing:-0.127px;">Фильтр по кол...</span>
<span class="t" style="left:1376.50px;top:553.00px;font-size:15px;color:#c3c9d6;font-style:italic;letter-spacing:-0.250px;">Филь...</span>
<span class="t" style="left:1472.50px;top:553.00px;font-size:15px;color:#c3c9d6;font-style:italic;letter-spacing:-0.280px;">Фил...</span>
<span class="t" style="left:1539.90px;top:553.00px;font-size:15px;color:#c3c9d6;font-style:italic;letter-spacing:-0.233px;">Филь...</span>
<span class="t" style="left:1635.50px;top:553.00px;font-size:15px;color:#c3c9d6;font-style:italic;letter-spacing:-0.125px;">Фильтр по колонке</span>
<span class="t" style="left:51.60px;top:589.00px;font-size:15px;color:#212529;letter-spacing:-0.050px;">10.0000</span>
<span class="t" style="left:122.20px;top:589.00px;font-size:15px;color:#212529;letter-spacing:0.700px;">Шт</span>
<span class="t" style="left:220.30px;top:589.00px;font-size:15px;color:#212529;letter-spacing:-0.067px;">10.0000</span>
<span class="t" style="left:290.80px;top:589.00px;font-size:15px;color:#212529;letter-spacing:0.700px;">Шт</span>
<span class="t" style="left:396.60px;top:589.00px;font-size:15px;color:#212529;letter-spacing:0.280px;">200.00</span>
<span class="t" style="left:486.00px;top:589.00px;font-size:15px;color:#212529;">2 000.00</span>
<span class="t" style="left:560.00px;top:589.00px;font-size:15px;color:#212529;letter-spacing:-0.150px;">20%</span>
<span class="t" style="left:735.30px;top:589.00px;font-size:15px;color:#212529;letter-spacing:0.040px;">400.00</span>
<span class="t" style="left:835.30px;top:589.00px;font-size:15px;color:#212529;letter-spacing:0.240px;">240.00</span>
<span class="t" style="left:924.40px;top:589.00px;font-size:15px;color:#212529;letter-spacing:0.071px;">2 400.00</span>
<span class="t" style="left:1370.20px;top:589.00px;font-size:15px;color:#212529;letter-spacing:0.011px;">01.08.2025</span>
<span class="t" style="left:51.60px;top:620.00px;font-size:15px;color:#212529;letter-spacing:-0.050px;">12.0000</span>
<span class="t" style="left:122.20px;top:620.00px;font-size:15px;color:#212529;letter-spacing:0.700px;">Шт</span>
<span class="t" style="left:220.30px;top:620.00px;font-size:15px;color:#212529;letter-spacing:-0.067px;">12.0000</span>
<span class="t" style="left:290.80px;top:620.00px;font-size:15px;color:#212529;letter-spacing:0.700px;">Шт</span>
<span class="t" style="left:396.60px;top:620.00px;font-size:15px;color:#212529;letter-spacing:0.280px;">660.00</span>
<span class="t" style="left:486.00px;top:620.00px;font-size:15px;color:#212529;">7 920.00</span>
<span class="t" style="left:560.00px;top:620.00px;font-size:15px;color:#212529;letter-spacing:-0.150px;">20%</span>
<span class="t" style="left:722.00px;top:620.00px;font-size:15px;color:#212529;letter-spacing:0.071px;">1 584.00</span>
<span class="t" style="left:835.30px;top:620.00px;font-size:15px;color:#212529;letter-spacing:0.240px;">792.00</span>
<span class="t" style="left:924.40px;top:620.00px;font-size:15px;color:#212529;letter-spacing:0.071px;">9 504.00</span>
<span class="t" style="left:1370.20px;top:620.00px;font-size:15px;color:#212529;letter-spacing:0.011px;">31.08.2025</span>
<span class="t" style="left:51.60px;top:652.00px;font-size:15px;color:#212529;letter-spacing:-0.050px;">15.0000</span>
<span class="t" style="left:122.20px;top:652.00px;font-size:15px;color:#212529;letter-spacing:0.700px;">Шт</span>
<span class="t" style="left:220.30px;top:652.00px;font-size:15px;color:#212529;letter-spacing:-0.067px;">15.0000</span>
<span class="t" style="left:290.80px;top:652.00px;font-size:15px;color:#212529;letter-spacing:0.700px;">Шт</span>
<span class="t" style="left:397.60px;top:652.00px;font-size:15px;color:#212529;letter-spacing:0.080px;">400.00</span>
<span class="t" style="left:486.00px;top:652.00px;font-size:15px;color:#212529;">6 000.00</span>
<span class="t" style="left:560.00px;top:652.00px;font-size:15px;color:#212529;letter-spacing:-0.150px;">20%</span>
<span class="t" style="left:722.00px;top:652.00px;font-size:15px;color:#212529;letter-spacing:0.071px;">1 200.00</span>
<span class="t" style="left:836.30px;top:652.00px;font-size:15px;color:#212529;letter-spacing:0.040px;">480.00</span>
<span class="t" style="left:924.40px;top:652.00px;font-size:15px;color:#212529;letter-spacing:0.071px;">7 200.00</span>
<span class="t" style="left:1370.20px;top:652.00px;font-size:15px;color:#212529;letter-spacing:0.011px;">22.08.2025</span>
<div style="position:absolute;left:13px;top:465px;width:314px;height:5px;background:#ed1c24;border-radius:3px"></div>
<div style="position:absolute;left:342px;top:483px;width:102px;height:193px;border:5px solid #ed1c24"></div>
<div style="position:absolute;left:1361px;top:485px;width:82px;height:184px;border:5px solid #ed1c24"></div>
</body></html>
